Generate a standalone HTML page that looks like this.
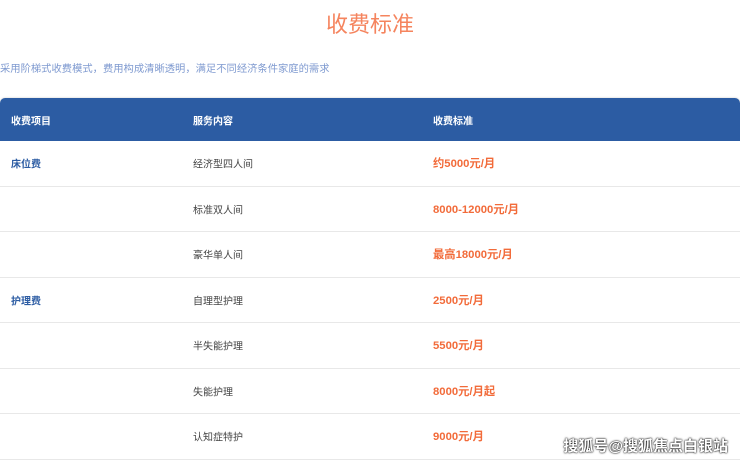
<!DOCTYPE html>
<html><head><meta charset="utf-8"><style>
body{margin:0;width:740px;height:462px;overflow:hidden;background:#fff;font-family:"Liberation Sans","Noto Sans CJK SC",sans-serif;position:relative}
.t{position:absolute;top:7px;left:0;width:740px;text-align:center;color:#f5845e;font-size:22px}
.s{position:absolute;top:60px;left:0;color:#7f9ad0;font-size:10.3px}
.tb{position:absolute;top:98px;left:0;width:740px;height:364px;border-radius:5px 5px 0 0;overflow:hidden;background:#fff;box-shadow:0 0 2px #ccc}
.h{height:43px;background:#2c5ca3;color:#fff;font-weight:bold;font-size:10px;position:relative}
.r{height:45.5px;border-bottom:1px solid #e8e8e8;position:relative;font-size:10px;box-sizing:border-box}
.c{position:absolute;top:50%;transform:translateY(-50%)}
.a{left:11px}.b{left:193px}.d{left:433px}
.n{color:#2c5ca3;font-weight:bold}.p{color:#f26b3a;font-weight:bold;font-size:11.3px}.m{color:#444}
.w{position:absolute;right:12px;bottom:6px;color:#fff;font-size:15px;font-weight:bold;text-shadow:0 0 2px #000,0 0 1px #000}
</style></head><body>
<div class="t">收费标准</div>
<div class="s">采用阶梯式收费模式，费用构成清晰透明，满足不同经济条件家庭的需求</div>
<div class="tb">
<div class="h"><span class="c a">收费项目</span><span class="c b">服务内容</span><span class="c d">收费标准</span></div>
<div class="r"><span class="c a n">床位费</span><span class="c b m">经济型四人间</span><span class="c d p">约5000元/月</span></div>
<div class="r"><span class="c b m">标准双人间</span><span class="c d p">8000-12000元/月</span></div>
<div class="r"><span class="c b m">豪华单人间</span><span class="c d p">最高18000元/月</span></div>
<div class="r"><span class="c a n">护理费</span><span class="c b m">自理型护理</span><span class="c d p">2500元/月</span></div>
<div class="r"><span class="c b m">半失能护理</span><span class="c d p">5500元/月</span></div>
<div class="r"><span class="c b m">失能护理</span><span class="c d p">8000元/月起</span></div>
<div class="r"><span class="c b m">认知症特护</span><span class="c d p">9000元/月</span></div>
</div>
<div class="w">搜狐号@搜狐焦点白银站</div>
</body></html>
